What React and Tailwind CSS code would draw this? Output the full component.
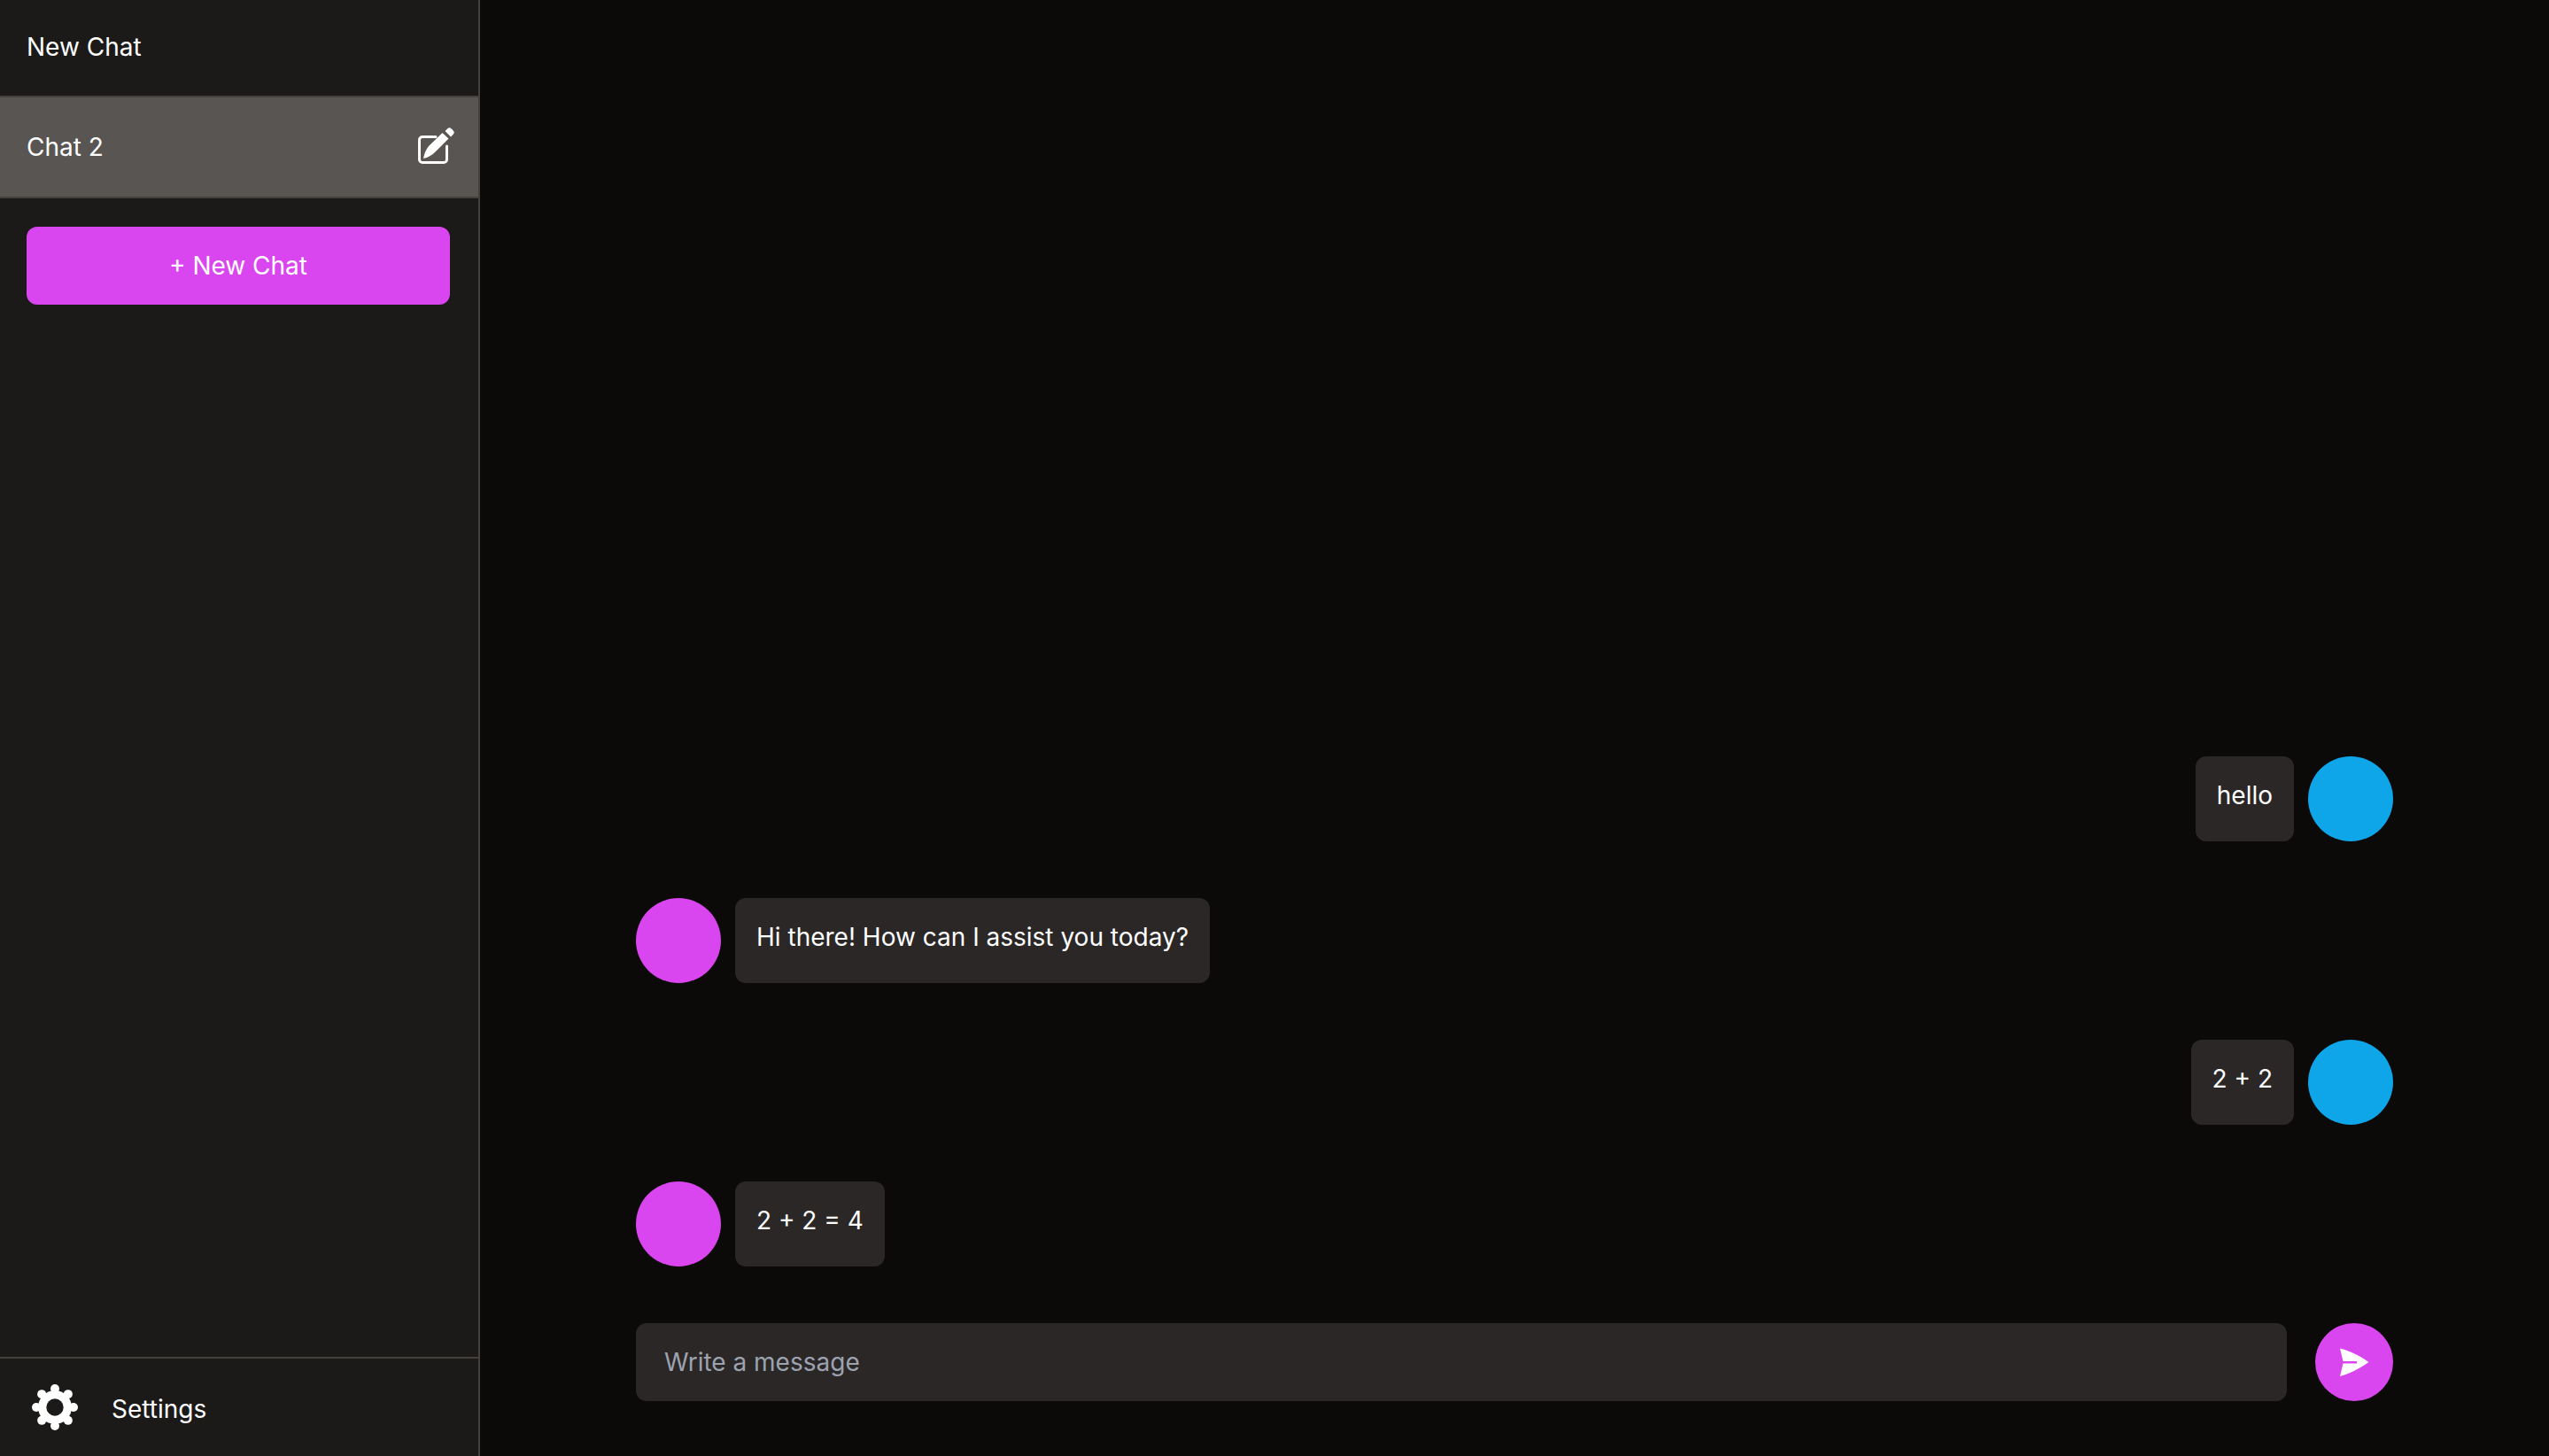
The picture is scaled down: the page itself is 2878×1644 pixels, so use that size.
function EditIcon() {
  return (
    <svg width="41" height="41" viewBox="0 0 41 41" className="mb-[3px] shrink-0 text-white" fill="none">
      <path d="M20 10.5H5a3.5 3.5 0 0 0-3.5 3.5V36a3.5 3.5 0 0 0 3.5 3.5H29a3.5 3.5 0 0 0 3.5-3.5V21" stroke="currentColor" strokeWidth="3" strokeLinecap="round" />
      <path d="M6 35C7 29 9 25 12 21L27.5 6L34.5 12.5L19 28C16 31 11 34 6 35Z" fill="currentColor" />
      <path d="M30.5 4L33 1.5a3.4 3.4 0 0 1 4.8 0l1.7 1.7a3.4 3.4 0 0 1 0 4.8L37 10.5Z" fill="currentColor" />
    </svg>
  );
}

function GearIcon() {
  const teeth = [0, 45, 90, 135, 180, 225, 270, 315];
  return (
    <svg width="52" height="54" viewBox="0 0 52 54" className="shrink-0">
      <circle cx="26" cy="27" r="19" fill="#fff" />
      {teeth.map((deg) => (
        <circle
          key={deg}
          cx={26 + 21 * Math.cos((deg * Math.PI) / 180)}
          cy={27 + 21 * Math.sin((deg * Math.PI) / 180)}
          r="5"
          fill="#fff"
        />
      ))}
      <circle cx="26" cy="27" r="9.7" fill="#1c1a19" />
    </svg>
  );
}

function SendIcon() {
  return (
    <svg width="34" height="33" viewBox="0 0 34 33">
      <path d="M1 0.5C12 3 24 9 33.5 16C24 23 12 29 1 32L4.5 17.5H20V15H4.5Z" fill="#fff" />
    </svg>
  );
}

function UserMessage({ text }) {
  return (
    <div className="flex justify-end gap-4">
      <div className="rounded-xl bg-[#2b2727] px-6 py-6 leading-10">{text}</div>
      <div className="h-24 w-24 shrink-0 rounded-full bg-[#0ea5e9]" />
    </div>
  );
}

function BotMessage({ text }) {
  return (
    <div className="flex gap-4">
      <div className="h-24 w-24 shrink-0 rounded-full bg-[#d946ef]" />
      <div className="rounded-xl bg-[#2b2727] px-6 py-6 leading-10">{text}</div>
    </div>
  );
}

export default function App() {
  return (
    <div className="flex h-screen bg-[#0c0a09] font-['Inter',sans-serif] text-[28px] text-white">
      <aside className="flex w-[542px] shrink-0 flex-col border-r-2 border-[#44403c] bg-[#1c1a19]">
        <div className="flex h-[110px] items-center border-b-2 border-[#44403c] px-[30px] pb-[3px]">New Chat</div>
        <div className="flex h-[114px] items-center justify-between border-b-2 border-[#44403c] bg-[#585552] pr-[27px] pl-[30px]">
          <span>Chat 2</span>
          <EditIcon />
        </div>
        <button className="mt-8 mr-8 ml-[30px] h-[88px] rounded-xl bg-[#d946ef] text-center">+ New Chat</button>
        <div className="mt-auto flex h-[112px] items-center gap-[38px] border-t-2 border-[#44403c] pl-9">
          <GearIcon />
          <span className="pt-[3px]">Settings</span>
        </div>
      </aside>

      <main className="flex flex-1 flex-col justify-end gap-16 px-[176px] pb-[62px]">
        <UserMessage text="hello" />
        <BotMessage text="Hi there! How can I assist you today?" />
        <UserMessage text="2 + 2" />
        <BotMessage text="2 + 2 = 4" />
        <div className="flex items-center gap-8">
          <input
            className="h-[88px] flex-1 rounded-xl bg-[#2b2727] px-8 text-white outline-none placeholder:text-[#9ca3af]"
            placeholder="Write a message"
          />
          <button className="flex h-[88px] w-[88px] shrink-0 items-center justify-center rounded-full bg-[#d946ef]">
            <SendIcon />
          </button>
        </div>
      </main>
    </div>
  );
}
